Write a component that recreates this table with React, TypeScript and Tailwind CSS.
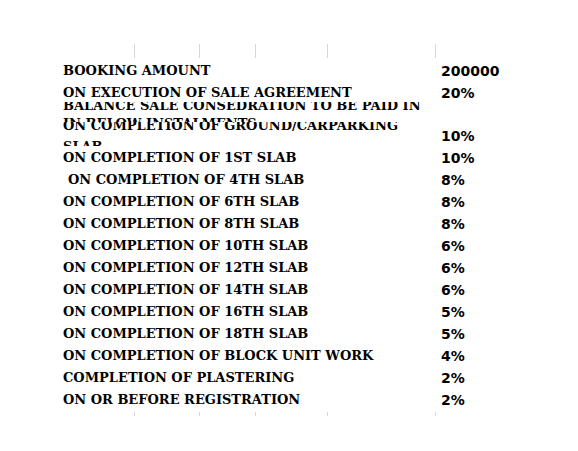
import React from "react";

const serif = "font-['DejaVu_Serif',serif] font-bold";
const sans = "font-['DejaVu_Sans',sans-serif] font-bold text-[14px]";

const slabs: [string, string, boolean?][] = [
  ["ON COMPLETION OF 1ST SLAB", "10%"],
  ["ON COMPLETION OF 4TH SLAB", "8%", true],
  ["ON COMPLETION OF 6TH SLAB", "8%"],
  ["ON COMPLETION OF 8TH SLAB", "8%"],
  ["ON COMPLETION OF 10TH SLAB", "6%"],
  ["ON COMPLETION OF 12TH SLAB", "6%"],
  ["ON COMPLETION OF 14TH SLAB", "6%"],
  ["ON COMPLETION OF 16TH SLAB", "5%"],
  ["ON COMPLETION OF 18TH SLAB", "5%"],
  ["ON COMPLETION OF BLOCK UNIT WORK", "4%"],
  ["COMPLETION OF PLASTERING", "2%"],
  ["ON OR BEFORE REGISTRATION", "2%"],
];

function Ticks({ className }: { className: string }) {
  return (
    <div className={`flex pl-[134px] ${className}`}>
      <div className="w-px h-full bg-[#d6d6d6]" />
      <div className="w-px h-full bg-[#d6d6d6] ml-[64px]" />
      <div className="w-px h-full bg-[#d6d6d6] ml-[55px]" />
      <div className="w-px h-full bg-[#d6d6d6] ml-[71px]" />
      <div className="w-px h-full bg-[#d6d6d6] ml-[107px]" />
    </div>
  );
}

function Row({ label, value, indent, h = "h-[22px]" }: { label: string; value: string; indent?: boolean; h?: string }) {
  return (
    <div className={`flex ${h} leading-[22px] text-[13px] whitespace-nowrap`}>
      <div className={`w-[378px] ${serif} ${indent ? "pl-[5px]" : ""}`}>{label}</div>
      <div className={sans}>{value}</div>
    </div>
  );
}

export default function App() {
  return (
    <div className="w-[578px] h-[451px] bg-white text-black pt-[44px]">
      <Ticks className="h-[14px] mb-[2px]" />
      <div className="pl-[63px]">
        <Row label="BOOKING AMOUNT" value="200000" />
        <Row label="ON EXECUTION OF SALE AGREEMENT" value="20%" h="h-[20px]" />
        <div className="flex text-[13px] whitespace-nowrap h-[45px]">
          <div className={`w-[378px] ${serif}`}>
            <div className="h-[20px] overflow-hidden">
              <div className="mt-[-5.5px] leading-[18px]">
                BALANCE SALE CONSEDRATION TO BE PAID IN
                <br />
                IN BELOW INSTALMENTS
              </div>
            </div>
            <div className="h-[24px] overflow-hidden">
              <div className="mt-[-7px] leading-[21px]">
                ON COMPLETION OF GROUND/CARPARKING
                <br />
                SLAB
              </div>
            </div>
          </div>
          <div className={`${sans} pt-[23px] leading-[22px]`}>10%</div>
        </div>
        {slabs.map(([label, value, indent]) => (
          <Row key={label} label={label} value={value} indent={indent} />
        ))}
      </div>
      <Ticks className="h-[4px] mt-px" />
    </div>
  );
}
